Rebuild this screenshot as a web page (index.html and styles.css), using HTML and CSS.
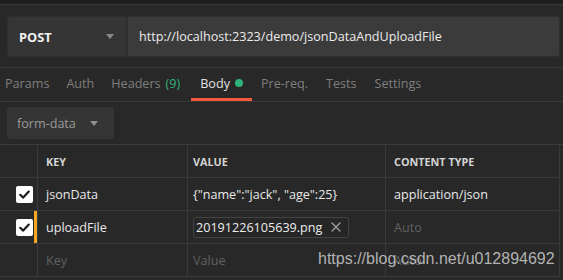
FILE: index.html
```html
<!DOCTYPE html>
<html>
<head>
<meta charset="utf-8">
<link rel="stylesheet" href="styles.css">
</head>
<body>
<div class="app">
  <div class="topstrip"></div>
  <div class="request">
    <div class="method">
      <span class="method-name">POST</span>
      <span class="caret"></span>
    </div>
    <div class="url">http://localhost:2323/demo/jsonDataAndUploadFile</div>
  </div>
  <div class="tabs">
    <div class="tab">Params</div>
    <div class="tab">Auth</div>
    <div class="tab">Headers <span class="count">(9)</span></div>
    <div class="tab active">Body <span class="dot"></span></div>
    <div class="tab">Pre-req.</div>
    <div class="tab">Tests</div>
    <div class="tab">Settings</div>
  </div>
  <div class="bodytype">
    <div class="select">
      <span>form-data</span>
      <span class="caret small"></span>
    </div>
  </div>
  <div class="grid">
    <div class="cell check-col head"></div>
    <div class="cell head">KEY</div>
    <div class="cell head val">VALUE</div>
    <div class="cell head ct">CONTENT TYPE</div>

    <div class="cell check-col"><span class="checkbox"><svg viewBox="0 0 17 17" width="17" height="17"><path d="M4.2 8.8 L7.2 11.6 L12.8 5.6" fill="none" stroke="#1c1c1c" stroke-width="2.2" stroke-linecap="round" stroke-linejoin="round"/></svg></span></div>
    <div class="cell">jsonData</div>
    <div class="cell val">{"name":"jack", "age":25}</div>
    <div class="cell ct">application/json</div>

    <div class="cell check-col marked"><span class="checkbox"><svg viewBox="0 0 17 17" width="17" height="17"><path d="M4.2 8.8 L7.2 11.6 L12.8 5.6" fill="none" stroke="#1c1c1c" stroke-width="2.2" stroke-linecap="round" stroke-linejoin="round"/></svg></span></div>
    <div class="cell">uploadFile</div>
    <div class="cell val"><span class="chip">20191226105639.png <svg class="x" viewBox="0 0 12 12" width="12" height="12"><path d="M2 2 L10 10 M10 2 L2 10" stroke="#9a9a9a" stroke-width="1.5" stroke-linecap="round"/></svg></span></div>
    <div class="cell ct placeholder">Auto</div>

    <div class="cell check-col"></div>
    <div class="cell placeholder">Key</div>
    <div class="cell val placeholder">Value</div>
    <div class="cell ct placeholder">Auto</div>
  </div>
  <div class="watermark">https://blog.csdn.net/u012894692</div>
</div>
</body>
</html>
```
FILE: styles.css
```css
html, body {
  margin: 0;
  padding: 0;
  background: #282828;
}
body {
  width: 563px;
  height: 280px;
  overflow: hidden;
  font-family: "Open Sans", "Noto Sans", sans-serif;
  font-size: 12.6px;
  color: #e6e6e6;
}
.app {
  position: relative;
  height: 280px;
}
.topstrip {
  height: 4px;
  background: #1f1f1f;
  border-bottom: 1px solid #383838;
}
.request {
  display: flex;
  padding: 11px 3px 10px 7px;
  border-bottom: 1px solid #383838;
}
.method {
  width: 120px;
  height: 41px;
  box-sizing: border-box;
  background: #353535;
  border: 1px solid #2e2e2e;
  border-radius: 3px 0 0 3px;
  display: flex;
  align-items: center;
  padding-left: 11px;
  padding-right: 12px;
  justify-content: space-between;
}
.method-name {
  font-weight: 700;
  color: #f0f0f0;
  font-size: 12.8px;
}
.caret {
  width: 0;
  height: 0;
  border-left: 4px solid transparent;
  border-right: 4px solid transparent;
  border-top: 5px solid #8a8a8a;
}
.url {
  flex: 1;
  height: 41px;
  box-sizing: border-box;
  background: #3b3b3b;
  border: 1px solid #2e2e2e;
  border-left: 1px solid #303030;
  border-radius: 0 3px 3px 0;
  display: flex;
  align-items: center;
  padding-left: 11px;
  color: #ececec;
}
.tabs {
  display: flex;
  height: 33px;
  margin-left: -4px;
  border-bottom: 1px solid #383838;
}
.tab {
  padding: 0 9px;
  display: flex;
  align-items: center;
  color: #7f7f7f;
  box-sizing: border-box;
  border-bottom: 3px solid transparent;
}
.tab:nth-child(2) { padding-left: 8px; }
.tab:nth-child(3) { padding-left: 8px; padding-right: 11px; }
.tab.active {
  color: #e2e2e2;
  border-bottom-color: #f05a38;
}
.count {
  color: #2fb37a;
  margin-left: 5px;
}
.dot {
  display: inline-block;
  width: 8px;
  height: 8px;
  border-radius: 50%;
  background: #2fb37a;
  margin-left: 5px;
}
.bodytype {
  padding: 5px 7px 5px 7px;
}
.select {
  width: 107px;
  height: 32px;
  box-sizing: border-box;
  background: #353535;
  border-radius: 3px;
  display: flex;
  align-items: center;
  padding-left: 10px;
  color: #9a9a9a;
}
.select .caret {
  margin-left: 14px;
  border-top-color: #909090;
}
.grid {
  display: grid;
  grid-template-columns: 38px 150px 198px 174px;
  border-top: 1px solid #3a3a3a;
}
.cell {
  height: 32px;
  box-sizing: content-box;
  border-right: 1px solid #3a3a3a;
  border-bottom: 1px solid #3a3a3a;
  display: flex;
  align-items: center;
  padding-left: 8px;
  color: #e8e8e8;
  white-space: nowrap;
  overflow: hidden;
}
.cell.val { padding-left: 5px; }
.cell.ct { padding-left: 8px; }
.cell.head {
  font-weight: 700;
  font-size: 10.8px;
  color: #d4d4d4;
}
.cell.placeholder { color: #616161; }
.check-col {
  justify-content: flex-end;
  padding-right: 3px;
  position: relative;
}
.grid .check-col {
  padding-left: 0;
}
.check-col.marked::after {
  content: "";
  position: absolute;
  right: 0;
  top: 0;
  width: 3px;
  height: 32px;
  background: #f5a623;
}
.checkbox {
  width: 17px;
  height: 17px;
  background: #ffffff;
  border-radius: 2px;
  display: flex;
  align-items: center;
  justify-content: center;
  margin-right: 1px;
}
.chip {
  display: inline-flex;
  align-items: center;
  height: 21px;
  box-sizing: border-box;
  border: 1px solid #434343;
  border-radius: 3px;
  padding: 0 6px 0 2px;
  color: #ececec;
  background: #262626;
}
.chip .x {
  margin-left: 8px;
}
.watermark {
  position: absolute;
  left: 318px;
  top: 250px;
  font-family: "Liberation Sans", Arial, sans-serif;
  font-size: 16px;
  color: rgba(205, 205, 205, 0.85);
  white-space: nowrap;
}
```
